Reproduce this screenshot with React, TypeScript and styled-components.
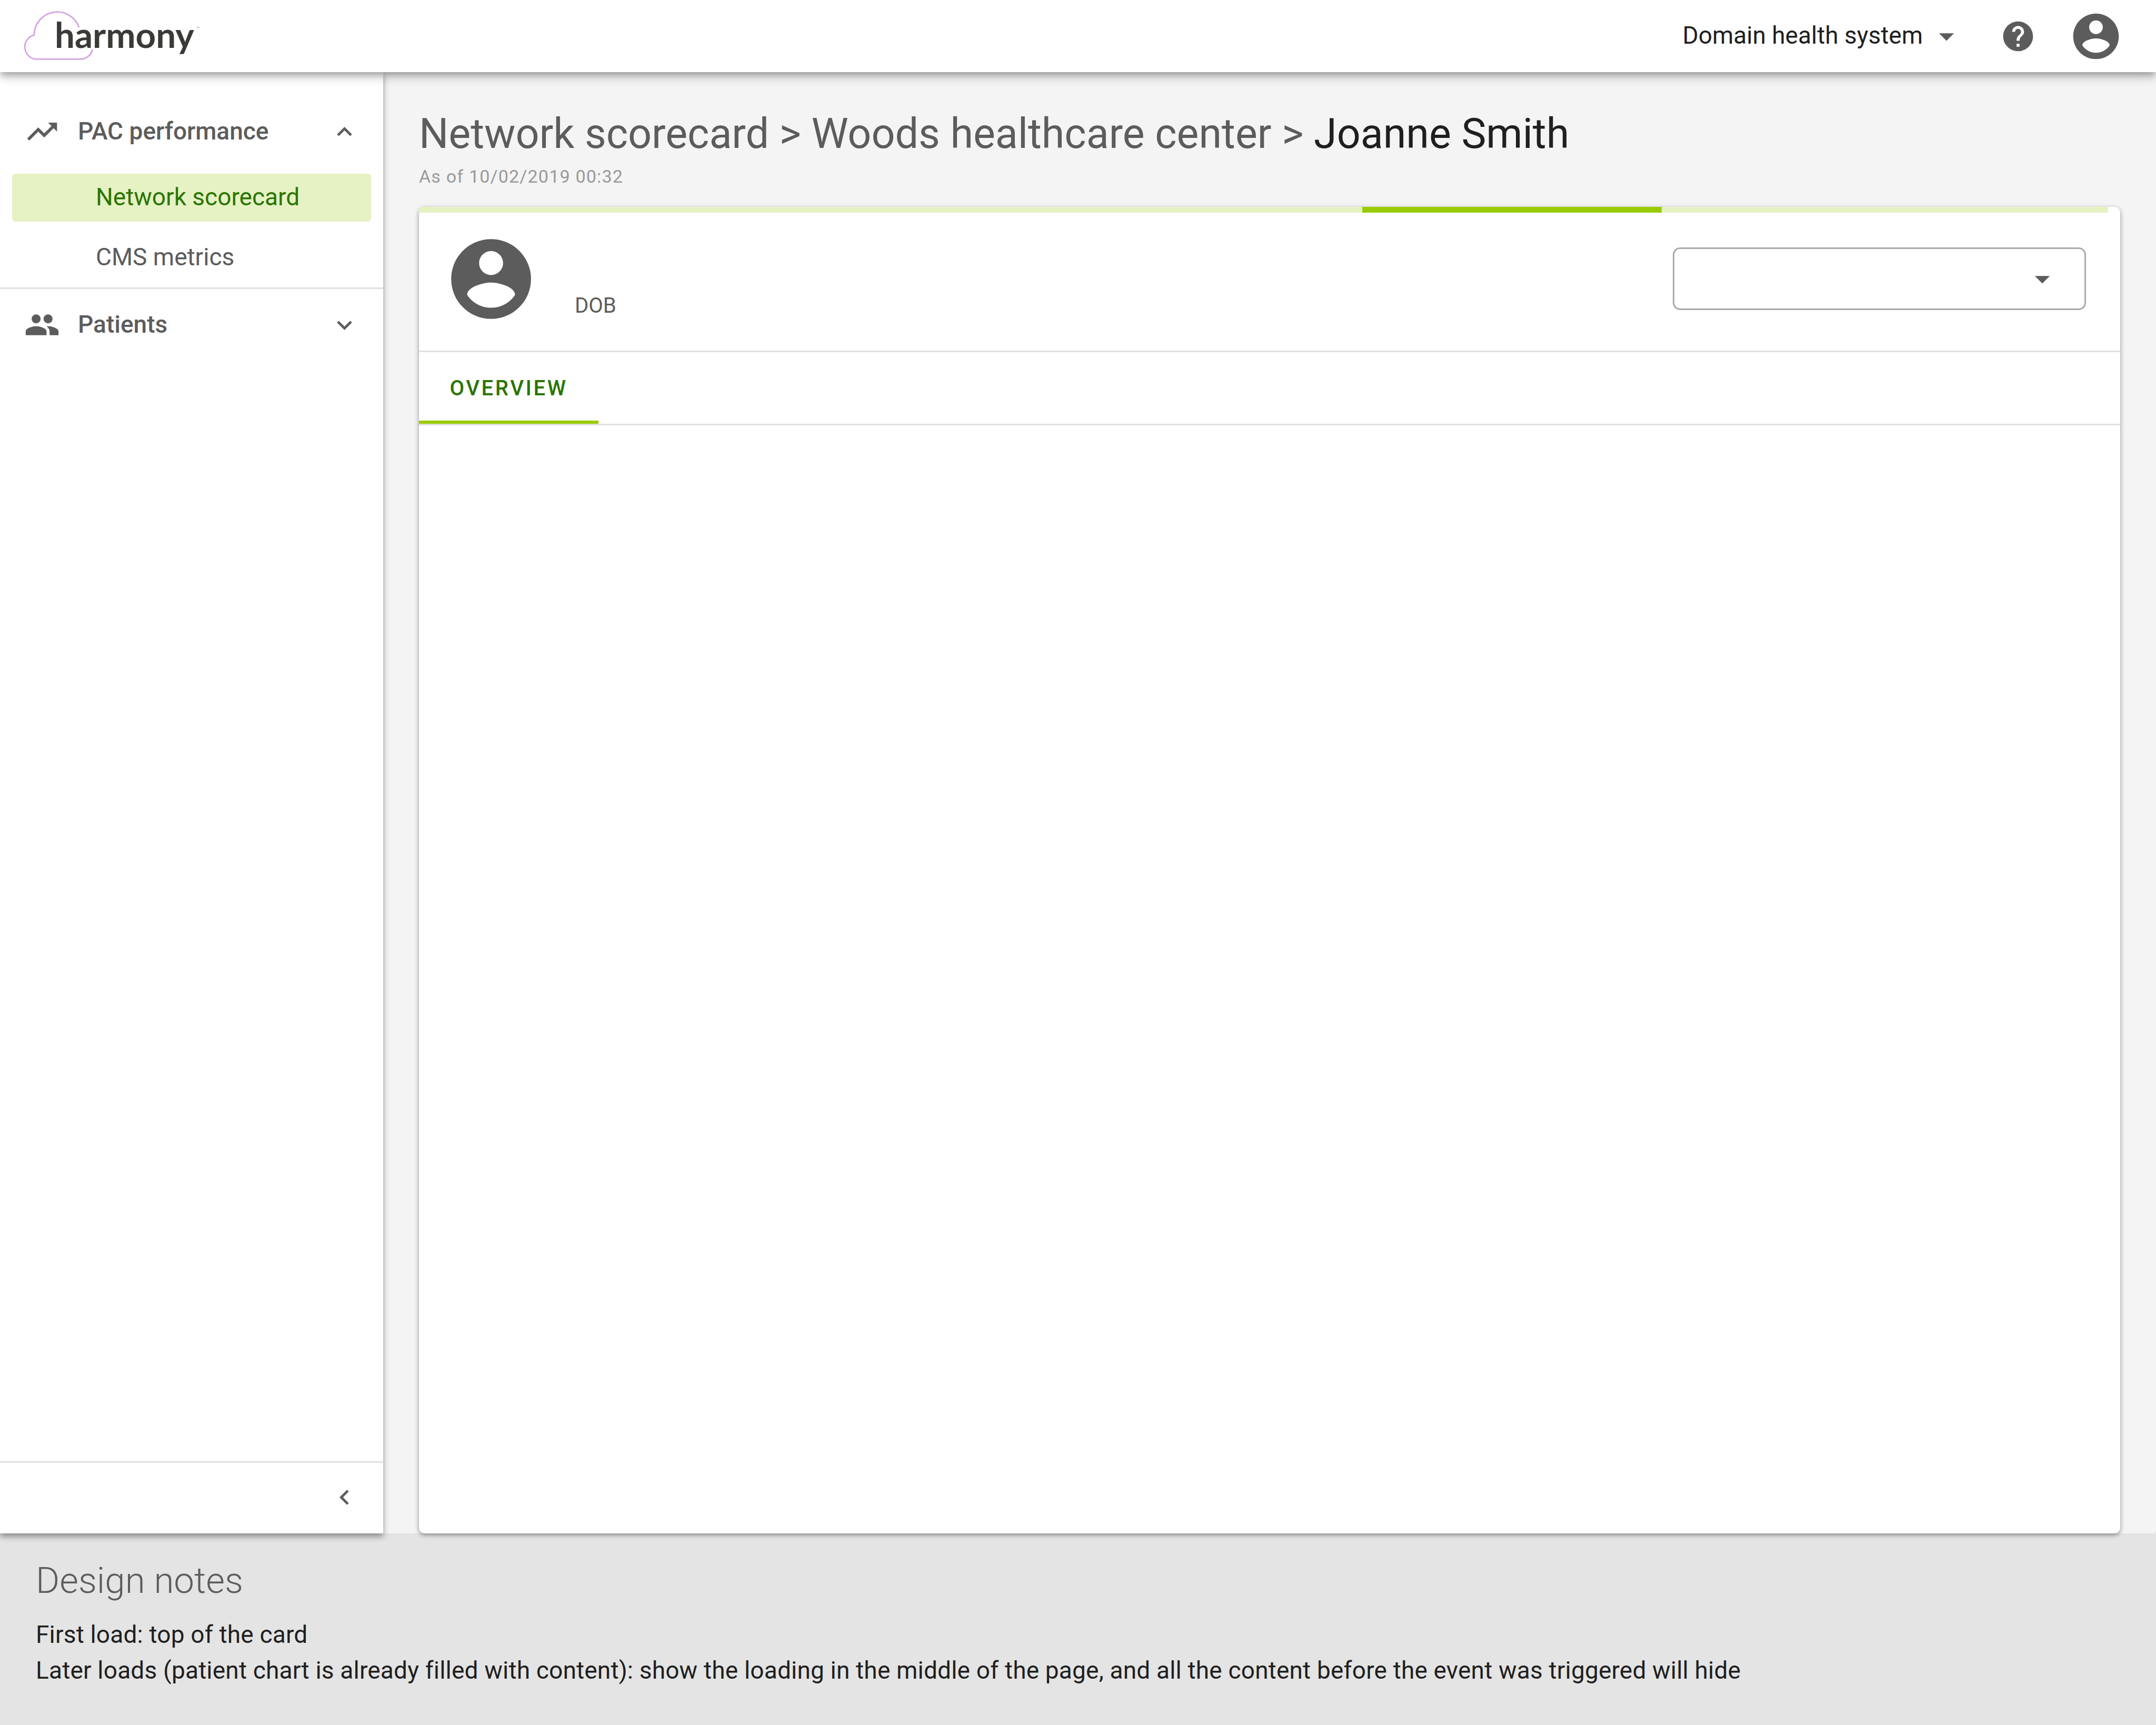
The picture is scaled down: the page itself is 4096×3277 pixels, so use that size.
import React from "react";
import styled, { createGlobalStyle } from "styled-components";

const color = {
  text: "#1f1f1f",
  muted: "#5c5c5c",
  faint: "#999999",
  line: "#e0e0e0",
  accent: "#99cc00",
  accentSoft: "#e6f2c4",
  accentText: "#2a7500",
  page: "#f4f4f4",
  notes: "#e4e4e4",
};

const GlobalStyle = createGlobalStyle`
  *, *::before, *::after { box-sizing: border-box; }
  body { margin: 0; font-family: Roboto, "Liberation Sans", sans-serif; color: ${color.text}; background: ${color.notes}; }
  h1, h2, p, ul, ol { margin: 0; padding: 0; }
  ul, ol { list-style: none; }
  a { color: inherit; text-decoration: none; }
  button, select { font: inherit; color: inherit; background: none; border: 0; margin: 0; padding: 0; cursor: pointer; }
`;

const paths = {
  trend: "M16 6l2.29 2.29-4.88 4.88-4-4L2 16.59 3.41 18l6-6 4 4 6.3-6.29L22 12V6z",
  people:
    "M16 11c1.66 0 2.99-1.34 2.99-3S17.66 5 16 5c-1.66 0-3 1.34-3 3s1.34 3 3 3zm-8 0c1.66 0 2.99-1.34 2.99-3S9.66 5 8 5C6.34 5 5 6.34 5 8s1.34 3 3 3zm0 2c-2.33 0-7 1.17-7 3.5V19h14v-2.5c0-2.33-4.67-3.5-7-3.5zm8 0c-.29 0-.62.02-.97.05 1.16.84 1.97 1.97 1.97 3.45V19h6v-2.5c0-2.33-4.67-3.5-7-3.5z",
  up: "M12 8l-6 6 1.41 1.41L12 10.83l4.59 4.58L18 14z",
  down: "M16.59 8.59L12 13.17 7.41 8.59 6 10l6 6 6-6z",
  left: "M15.41 7.41L14 6l-6 6 6 6 1.41-1.41L10.83 12z",
  caret: "M7 10l5 5 5-5z",
  help:
    "M12 2C6.48 2 2 6.48 2 12s4.48 10 10 10 10-4.48 10-10S17.52 2 12 2zm1 17h-2v-2h2v2zm2.07-7.75l-.9.92C13.45 12.9 13 13.5 13 15h-2v-.5c0-1.1.45-2.1 1.17-2.83l1.24-1.26c.37-.36.59-.86.59-1.41 0-1.1-.9-2-2-2s-2 .9-2 2H8c0-2.21 1.79-4 4-4s4 1.79 4 4c0 .88-.36 1.68-.93 2.25z",
  account:
    "M12 2C6.48 2 2 6.48 2 12s4.48 10 10 10 10-4.48 10-10S17.52 2 12 2zm0 3c1.66 0 3 1.34 3 3s-1.34 3-3 3-3-1.34-3-3 1.34-3 3-3zm0 14.2c-2.5 0-4.71-1.28-6-3.22.03-1.99 4-3.08 6-3.08 1.99 0 5.97 1.09 6 3.08-1.29 1.94-3.5 3.22-6 3.22z",
};

const Svg = styled.svg<{ $size: number }>`
  display: block;
  flex: none;
  width: ${(p) => p.$size}px;
  height: ${(p) => p.$size}px;
  fill: ${color.muted};
`;

function Icon({ name, size = 68 }: { name: keyof typeof paths; size?: number }) {
  return (
    <Svg viewBox="0 0 24 24" $size={size} aria-hidden="true">
      <path d={paths[name]} />
    </Svg>
  );
}

const Page = styled.div`
  display: flex;
  flex-direction: column;
  min-height: 100vh;
`;

const TopBar = styled.header`
  position: relative;
  z-index: 3;
  display: flex;
  align-items: center;
  justify-content: space-between;
  height: 137px;
  padding: 0 62px 0 46px;
  background: #fff;
  box-shadow: 0 6px 11px -3px rgba(0, 0, 0, 0.24), 0 11px 14px rgba(0, 0, 0, 0.14), 0 3px 28px rgba(0, 0, 0, 0.12);
`;

const LogoSvg = styled.svg`
  display: block;
  width: 334px;
  height: 91px;
  overflow: visible;
`;

const Account = styled.div`
  display: flex;
  align-items: center;
`;

const SystemPicker = styled.button`
  display: flex;
  align-items: center;
  gap: 11px;
  margin-right: 6px;
  font-size: 46px;
  line-height: 68px;
`;

const PickerLabel = styled.span`
  padding-bottom: 4px;
`;

const IconButton = styled.button`
  display: flex;
  margin-left: 62px;
`;

const Body = styled.div`
  position: relative;
  z-index: 1;
  flex: 1;
  display: flex;
  border-bottom-right-radius: 6px;
  background: ${color.page};
`;

const Sidebar = styled.nav`
  position: relative;
  flex: none;
  display: flex;
  flex-direction: column;
  width: 728px;
  padding-top: 45px;
  background: #fff;
  box-shadow: 0 6px 11px rgba(0, 0, 0, 0.4);
`;

const SectionHeader = styled.button`
  display: flex;
  align-items: center;
  width: 100%;
  height: 136px;
  padding: 0 45px 0 46px;
  gap: 34px;
  font-size: 46px;
  font-weight: 500;
  color: ${color.muted};
  text-align: left;
`;

const SectionLabel = styled.span`
  flex: 1;
  padding-bottom: 2px;
  line-height: 68px;
`;

const SubList = styled.ul`
  display: grid;
  gap: 23px;
  padding: 12px 23px 11px;
  border-bottom: 3px solid ${color.line};
`;

const SubLink = styled.a<{ $active?: boolean }>`
  display: flex;
  align-items: center;
  height: 91px;
  padding: 0 0 4px 159px;
  border-radius: 6px;
  font-size: 46px;
  color: ${(p) => (p.$active ? color.accentText : color.muted)};
  background: ${(p) => (p.$active ? color.accentSoft : "transparent")};
`;

const SidebarFooter = styled.div`
  display: flex;
  justify-content: flex-end;
  align-items: center;
  height: 137px;
  margin-top: auto;
  padding: 0 45px 4px 0;
  border-top: 3px solid ${color.line};
`;

const Main = styled.main`
  flex: 1;
  display: flex;
  flex-direction: column;
  min-width: 0;
  padding: 69px 68px 0;
`;

const Breadcrumb = styled.h1`
  font-size: 79px;
  line-height: 96px;
  font-weight: 400;
  color: ${color.muted};
`;

const Current = styled.span`
  color: ${color.text};
`;

const AsOf = styled.p`
  margin: 11px 0 36px;
  font-size: 34px;
  line-height: 44px;
  letter-spacing: 0.035em;
  color: ${color.faint};
`;

const Card = styled.section`
  position: relative;
  flex: 1;
  background: #fff;
  border-radius: 11px;
  box-shadow: 0 3px 8px rgba(0, 0, 0, 0.42);
`;

const Progress = styled.div`
  position: absolute;
  top: 0;
  left: 0;
  right: 23px;
  height: 11px;
  background: ${color.accentSoft};
`;

const ProgressBar = styled.div`
  width: 17.73%;
  height: 100%;
  margin-left: 55.85%;
  background: ${color.accent};
`;

const PatientHeader = styled.div`
  display: flex;
  align-items: center;
  height: 276px;
  padding: 0 65px 0 46px;
  border-bottom: 3px solid ${color.line};
`;

const Info = styled.p`
  flex: 1;
  align-self: flex-end;
  margin-left: 68px;
  padding-bottom: 57px;
  font-size: 40px;
  line-height: 57px;
  color: ${color.muted};
`;

const SelectBox = styled.div`
  display: grid;
  align-items: center;
  width: 785px;
  height: 119px;

  > * { grid-area: 1 / 1; }
  > svg { justify-self: end; margin-right: 49px; pointer-events: none; }
`;

const Select = styled.select`
  appearance: none;
  width: 100%;
  height: 100%;
  border: 3px solid #aaaaaa;
  border-radius: 14px;
  background: #fff;
`;

const Tabs = styled.div`
  display: flex;
  height: 139px;
  border-bottom: 3px solid ${color.line};
`;

const Tab = styled.button`
  width: 341px;
  padding-top: 6px;
  border-bottom: 6px solid ${color.accent};
  font-size: 40px;
  font-weight: 500;
  letter-spacing: 0.09em;
  color: ${color.accentText};
`;

const Notes = styled.footer`
  padding: 50px 68px 70px;
  background: ${color.notes};
`;

const NotesTitle = styled.h2`
  margin-bottom: 28px;
  font-size: 69px;
  line-height: 80px;
  font-weight: 300;
  color: ${color.muted};
`;

const Note = styled.p`
  font-size: 46px;
  line-height: 68px;
  letter-spacing: 0.004em;
`;

function Logo() {
  return (
    <LogoSvg viewBox="48 24 352 96" role="img" aria-label="harmony">
      <path
        d="M157.7 54.7A46.3 46.3 0 0 0 67.7 70A24.5 24.5 0 0 0 73.3 118.3H160A25 25 0 0 0 184.7 99.3"
        fill="none"
        stroke="#d7a3e2"
        strokeWidth="3"
      />
      <text x="109" y="96" fontFamily="Lato, sans-serif" fontWeight="700" fontSize="71" fill="#3a3b36">
        harmony
      </text>
      <text x="393" y="57" fontFamily="Roboto, sans-serif" fontSize="4" fill="#888">
        TM
      </text>
    </LogoSvg>
  );
}

export default function App() {
  return (
    <>
      <GlobalStyle />
      <Page>
        <TopBar>
          <Logo />
          <Account>
            <SystemPicker type="button">
              <PickerLabel>Domain health system</PickerLabel>
              <Icon name="caret" />
            </SystemPicker>
            <IconButton type="button" aria-label="Help">
              <Icon name="help" />
            </IconButton>
            <IconButton type="button" aria-label="Account">
              <Icon name="account" size={104} />
            </IconButton>
          </Account>
        </TopBar>
        <Body>
          <Sidebar>
            <SectionHeader type="button" aria-expanded="true">
              <Icon name="trend" />
              <SectionLabel>PAC performance</SectionLabel>
              <Icon name="up" size={57} />
            </SectionHeader>
            <SubList>
              <li>
                <SubLink href="#scorecard" $active>Network scorecard</SubLink>
              </li>
              <li>
                <SubLink href="#cms">CMS metrics</SubLink>
              </li>
            </SubList>
            <SectionHeader type="button" aria-expanded="false">
              <Icon name="people" />
              <SectionLabel>Patients</SectionLabel>
              <Icon name="down" size={57} />
            </SectionHeader>
            <SidebarFooter>
              <IconButton type="button" aria-label="Collapse menu">
                <Icon name="left" size={57} />
              </IconButton>
            </SidebarFooter>
          </Sidebar>
          <Main>
            <Breadcrumb>
              <a href="#scorecard">Network scorecard</a> &gt; <a href="#woods">Woods healthcare center</a> &gt;{" "}
              <Current>Joanne Smith</Current>
            </Breadcrumb>
            <AsOf>As of 10/02/2019 00:32</AsOf>
            <Card>
              <Progress role="progressbar" aria-label="Loading">
                <ProgressBar />
              </Progress>
              <PatientHeader>
                <Icon name="account" size={182} />
                <Info>DOB</Info>
                <SelectBox>
                  <Select aria-label="Episode" />
                  <Icon name="caret" />
                </SelectBox>
              </PatientHeader>
              <Tabs role="tablist">
                <Tab type="button" role="tab" aria-selected="true">OVERVIEW</Tab>
              </Tabs>
            </Card>
          </Main>
        </Body>
        <Notes>
          <NotesTitle>Design notes</NotesTitle>
          <Note>First load: top of the card</Note>
          <Note>
            Later loads (patient chart is already filled with content): show the loading in the middle of the page, and
            all the content before the event was triggered will hide
          </Note>
        </Notes>
      </Page>
    </>
  );
}
